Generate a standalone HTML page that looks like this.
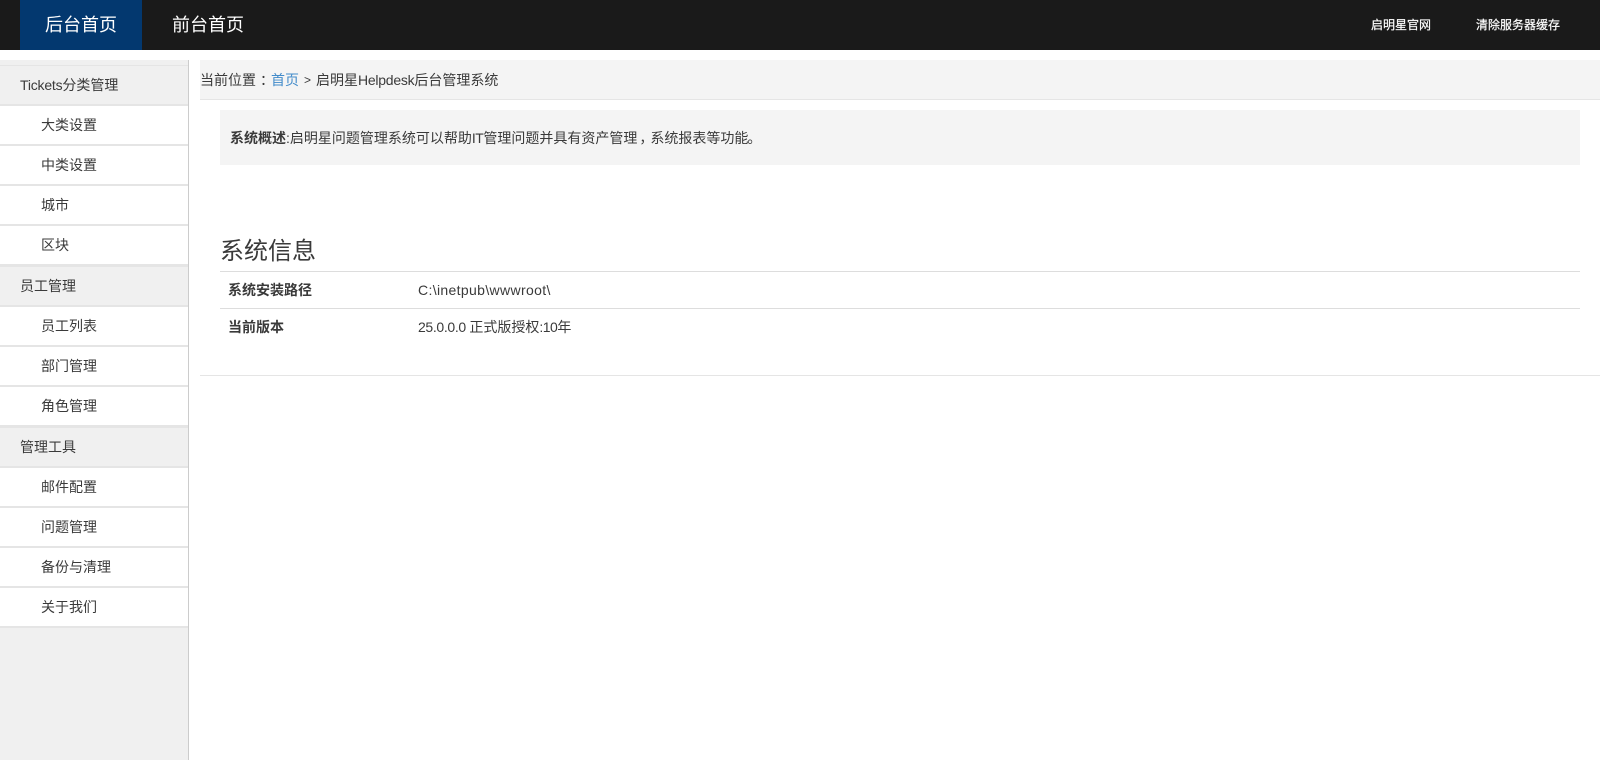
<!DOCTYPE html>
<html lang="zh-CN">
<head>
<meta charset="utf-8">
<title>启明星Helpdesk后台管理系统</title>
<style>
html,body{margin:0;padding:0;background:#fff;}
body{width:1600px;height:760px;overflow:hidden;position:relative;font-family:"Liberation Sans","Noto Sans CJK SC",sans-serif;font-size:14px;color:#3a3a3a;}
.a{position:absolute;white-space:nowrap;}
.top{left:0;top:0;width:1600px;height:50px;background:#1a1a1a;}
.active{left:20px;top:0;width:122px;height:50px;background:#03386f;}
.nav{top:0;line-height:50px;font-size:18px;color:#fff;}
.rt{top:0;line-height:50px;font-size:12px;color:#fff;-webkit-text-stroke:0.2px #fff;}
.side{left:0;top:60px;width:188px;height:700px;background:#f0f0f0;border-right:1px solid #ccc;}
.row{left:0;width:188px;background:#fff;}
.ln{left:0;width:188px;background:#e5e5e5;}
.t{line-height:20px;}
.s{position:relative;}
</style>
</head>
<body>
<div class="a top"></div>
<div class="a active"></div>
<div class="a nav" style="left:45px">后台首页</div>
<div class="a nav" style="left:172px">前台首页</div>
<div class="a rt" style="left:1371px">启明星官网</div>
<div class="a rt" style="left:1476px">清除服务器缓存</div>

<div class="a side"></div>
<div class="a ln" style="top:65px;height:1px"></div>
<div class="a row" style="top:106px;height:158px"></div>
<div class="a row" style="top:307px;height:118px"></div>
<div class="a row" style="top:468px;height:158px"></div>
<div class="a ln" style="top:104px;height:2px"></div>
<div class="a ln" style="top:144px;height:2px"></div>
<div class="a ln" style="top:184px;height:2px"></div>
<div class="a ln" style="top:224px;height:2px"></div>
<div class="a ln" style="top:264px;height:3px"></div>
<div class="a ln" style="top:305px;height:2px"></div>
<div class="a ln" style="top:345px;height:2px"></div>
<div class="a ln" style="top:385px;height:2px"></div>
<div class="a ln" style="top:425px;height:3px"></div>
<div class="a ln" style="top:466px;height:2px"></div>
<div class="a ln" style="top:506px;height:2px"></div>
<div class="a ln" style="top:546px;height:2px"></div>
<div class="a ln" style="top:586px;height:2px"></div>
<div class="a ln" style="top:626px;height:2px"></div>

<div class="a t" style="left:20px;top:75px"><span style="letter-spacing:-0.2px">Tickets</span>分类管理</div>
<div class="a t" style="left:41px;top:115px">大类设置</div>
<div class="a t" style="left:41px;top:155px">中类设置</div>
<div class="a t" style="left:41px;top:195px">城市</div>
<div class="a t" style="left:41px;top:235px">区块</div>
<div class="a t" style="left:20px;top:276px">员工管理</div>
<div class="a t" style="left:41px;top:316px">员工列表</div>
<div class="a t" style="left:41px;top:356px">部门管理</div>
<div class="a t" style="left:41px;top:396px">角色管理</div>
<div class="a t" style="left:20px;top:437px">管理工具</div>
<div class="a t" style="left:41px;top:477px">邮件配置</div>
<div class="a t" style="left:41px;top:517px">问题管理</div>
<div class="a t" style="left:41px;top:557px">备份与清理</div>
<div class="a t" style="left:41px;top:597px">关于我们</div>

<div class="a" style="left:200px;top:60px;width:1400px;height:39px;background:#f4f4f4;border-bottom:1px solid #e5e5e5"></div>
<div class="a t" style="left:200px;top:70px">当前位置<span class="s" style="left:4px">：</span></div>
<div class="a t" style="left:271px;top:70px;color:#428bca">首页</div>
<div class="a t" style="left:304px;top:70px;font-size:12px">&gt;</div>
<div class="a t" style="left:316px;top:70px">启明星<span style="letter-spacing:-0.25px">Helpdesk</span>后台管理系统</div>

<div class="a" style="left:220px;top:110px;width:1360px;height:55px;background:#f4f4f4"></div>
<div class="a t" style="left:230px;top:128px"><b>系统概述</b>:启明星问题管理系统可以帮助<span style="letter-spacing:-0.5px">IT</span>管理问题并具有资产管理<span class="s" style="left:2px;letter-spacing:-1px">，</span>系统报表等功能<span class="s" style="left:-1px">。</span></div>

<div class="a" style="left:220px;top:237px;font-size:24px;line-height:30px">系统信息</div>
<div class="a" style="left:220px;top:271px;width:1360px;height:1px;background:#ddd"></div>
<div class="a t" style="left:228px;top:280px;font-weight:bold">系统安装路径</div>
<div class="a t" style="left:418px;top:280px;letter-spacing:0.35px">C:\inetpub\wwwroot\</div>
<div class="a" style="left:220px;top:308px;width:1360px;height:1px;background:#ddd"></div>
<div class="a t" style="left:228px;top:317px;font-weight:bold">当前版本</div>
<div class="a t" style="left:418px;top:317px"><span style="letter-spacing:-0.35px">25.0.0.0 </span>正式版授权<span style="letter-spacing:-0.5px">:10</span>年</div>
<div class="a" style="left:200px;top:375px;width:1400px;height:1px;background:#e5e5e5"></div>
</body>
</html>
